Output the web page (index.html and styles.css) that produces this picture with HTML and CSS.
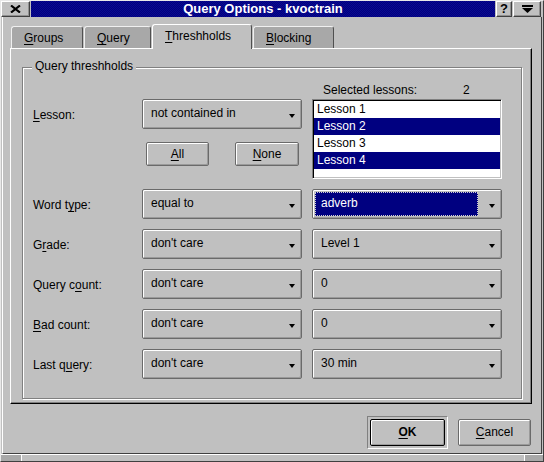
FILE: index.html
```html
<!DOCTYPE html>
<html>
<head>
<meta charset="utf-8">
<title>Query Options - kvoctrain</title>
<link rel="stylesheet" href="styles.css">
</head>
<body>
<div class="window">
  <div class="titlebar">
    <div class="tbtn tb-close">
      <svg width="11" height="8" viewBox="0 0 11 8"><path d="M1 0.5 L10 7.5 M10 0.5 L1 7.5" stroke="#000" stroke-width="2.2" fill="none"/></svg>
    </div>
    <div class="caption">Query Options - kvoctrain</div>
    <div class="tbtn tb-help">?</div>
    <div class="tbtn tb-menu">
      <svg width="11" height="8" viewBox="0 0 11 8"><rect x="0" y="0" width="11" height="2" fill="#000"/><path d="M0 3 H11 L5.5 8 Z" fill="#000"/></svg>
    </div>
  </div>
  <div class="client">
    <div class="tabbar">
      <div class="tab tab-groups"><u>G</u>roups</div>
      <div class="tab tab-query"><u>Q</u>uery</div>
      <div class="tab tab-thresh selected"><u>T</u>hreshholds</div>
      <div class="tab tab-blocking"><u>B</u>locking</div>
    </div>
    <div class="panel">
      <div class="group">
        <span class="legend">Query threshholds</span>
        <div class="sel-head"><span class="sel-label">Selected lessons:</span><span>2</span></div>
        <div class="grid">
          <div class="lbl"><u>L</u>esson:</div>
          <div class="lesson-mid">
            <div class="combo"><span class="combo-text">not contained in</span><span class="arrow"></span></div>
            <div class="btnrow">
              <button class="btn btn-all"><u>A</u>ll</button>
              <button class="btn btn-none"><u>N</u>one</button>
            </div>
          </div>
          <div class="listbox">
            <div class="item">Lesson 1</div>
            <div class="item sel">Lesson 2</div>
            <div class="item">Lesson 3</div>
            <div class="item sel">Lesson 4</div>
          </div>

          <div class="lbl">Word t<u>y</u>pe:</div>
          <div class="combo"><span class="combo-text">equal to</span><span class="arrow"></span></div>
          <div class="combo focus"><span class="hilite">adverb</span><span class="arrow"></span></div>

          <div class="lbl">G<u>r</u>ade:</div>
          <div class="combo"><span class="combo-text">don't care</span><span class="arrow"></span></div>
          <div class="combo"><span class="combo-text">Level 1</span><span class="arrow"></span></div>

          <div class="lbl">Query c<u>o</u>unt:</div>
          <div class="combo"><span class="combo-text">don't care</span><span class="arrow"></span></div>
          <div class="combo"><span class="combo-text">0</span><span class="arrow"></span></div>

          <div class="lbl"><u>B</u>ad count:</div>
          <div class="combo"><span class="combo-text">don't care</span><span class="arrow"></span></div>
          <div class="combo"><span class="combo-text">0</span><span class="arrow"></span></div>

          <div class="lbl">Last q<u>u</u>ery:</div>
          <div class="combo"><span class="combo-text">don't care</span><span class="arrow"></span></div>
          <div class="combo"><span class="combo-text">30 min</span><span class="arrow"></span></div>
        </div>
      </div>
    </div>
    <div class="actions">
      <div class="default-frame"><button class="btn btn-ok"><u>O</u>K</button></div>
      <button class="btn btn-cancel"><u>C</u>ancel</button>
    </div>
  </div>
  <div class="grip"><span class="grip-l"></span><span class="grip-m"></span><span class="grip-r"></span></div>
</div>
</body>
</html>
```
FILE: styles.css
```css
html, body {
  margin: 0;
  padding: 0;
  background: #c0c0c0;
}
body {
  font-family: "Liberation Sans", Arial, sans-serif;
  font-size: 12px;
  color: #000;
}
u { text-decoration-thickness: 1px; text-underline-offset: 2px; }

.window {
  width: 544px;
  height: 462px;
  box-sizing: border-box;
  border: 1px solid;
  border-color: #e8e8e8 #404040 #404040 #e8e8e8;
  display: flex;
  flex-direction: column;
  background: #c0c0c0;
  overflow: hidden;
}

/* title bar */
.titlebar {
  height: 16px;
  display: flex;
  gap: 1px;
  margin-right: 2px;
}
.tbtn {
  height: 16px;
  box-sizing: border-box;
  border: 1px solid;
  border-color: #fff #404040 #404040 #fff;
  box-shadow: inset -1px -1px 0 #909090;
  display: flex;
  align-items: center;
  justify-content: center;
  background: #c0c0c0;
}
.tb-close { width: 29px; }
.tb-help { width: 16px; font-weight: bold; font-size: 13px; line-height: 14px; }
.tb-menu { width: 28px; }
.caption {
  width: 464px;
  height: 16px;
  background-color: #000080;
  background-image: repeating-conic-gradient(#000080 0% 25%, #0a0a90 0% 50%);
  background-size: 2px 2px;
  color: #fff;
  font-weight: bold;
  font-size: 13px;
  line-height: 16px;
  text-align: center;
}

/* client */
.client {
  flex: 1;
  margin: 0 1px;
  border-left: 1px solid #fff;
  border-right: 1px solid #404040;
  border-bottom: 1px solid #404040;
  padding: 7px 9px 0 7px;
  display: flex;
  flex-direction: column;
}

.tabbar {
  height: 24px;
  display: flex;
  align-items: flex-end;
  gap: 1px;
  padding-left: 1px;
  position: relative;
  z-index: 1;
}
.tab {
  height: 22px;
  box-sizing: border-box;
  background: #a8a8a8;
  border-top: 1px solid #f0f0f0;
  border-left: 1px solid #f0f0f0;
  border-right: 1px solid #505050;
  border-radius: 3px 3px 0 0;
  padding: 5px 0 0 12px;
  line-height: 13px;
  white-space: nowrap;
}
.tab-groups { width: 72px; }
.tab-query { width: 67px; }
.tab-thresh { width: 100px; }
.tab-blocking { width: 81px; }
.tab.selected {
  height: 25px;
  margin-bottom: -1px;
  background: #c0c0c0;
  border-top-color: #fff;
  border-left-color: #fff;
}

.panel {
  height: 356px;
  box-sizing: border-box;
  border: 1px solid;
  border-color: #fff #000 #000 #fff;
  box-shadow: inset -1px -1px 0 #808080;
  padding: 18px 0 0 11px;
}

.group {
  position: relative;
  width: 500px;
  height: 332px;
  box-sizing: border-box;
  border: 1px solid #808080;
  box-shadow: inset 1px 1px 0 #fff, 1px 1px 0 #fff;
  padding: 14px 0 0 10px;
}
.legend {
  position: absolute;
  top: -9px;
  left: 9px;
  padding: 0 3px;
  background: #c0c0c0;
  line-height: 15px;
}
.sel-head {
  height: 17px;
  line-height: 17px;
  margin-left: 279px;
  padding-left: 11px;
  display: flex;
}
.sel-label { width: 140px; }

.grid {
  display: grid;
  grid-template-columns: 99px 160px 190px;
  grid-template-rows: 80px repeat(5, 30px);
  column-gap: 10px;
  row-gap: 10px;
}
.lbl {
  line-height: 30px;
  padding-top: 1px;
  white-space: nowrap;
}

.combo {
  height: 30px;
  box-sizing: border-box;
  border: 1px solid #6a6a6a;
  border-radius: 2px;
  box-shadow: inset 1px 1px 0 #fff, inset -1px -1px 0 #9a9a9a;
  display: flex;
  align-items: flex-start;
  padding: 0 6px 0 8px;
}
.combo-text {
  flex: 1;
  line-height: 14px;
  padding-top: 6px;
  white-space: nowrap;
}
.arrow {
  width: 0;
  height: 0;
  margin-top: 14px;
  border-left: 3.5px solid transparent;
  border-right: 3.5px solid transparent;
  border-top: 4px solid #000;
}
.combo.focus { padding-left: 2px; }
.hilite {
  width: 168px;
  height: 24px;
  margin-top: 2px;
  margin-right: 11px;
  box-sizing: border-box;
  background: #000080;
  color: #fff;
  outline: 1px dotted #d0d0d0;
  outline-offset: -1px;
  padding: 4px 0 0 6px;
  line-height: 14px;
}

.lesson-mid {
  display: flex;
  flex-direction: column;
}
.btnrow {
  margin-top: 13px;
  display: flex;
  justify-content: space-between;
  padding: 0 3px 0 4px;
}
.btn {
  box-sizing: border-box;
  border: 1px solid #6a6a6a;
  border-radius: 2px;
  box-shadow: inset 1px 1px 0 #fff, inset -1px -1px 0 #9a9a9a;
  background: #c0c0c0;
  font: inherit;
  color: #000;
  padding: 0;
  text-align: center;
}
.btn-all { width: 63px; height: 24px; line-height: 22px; }
.btn-none { width: 64px; height: 24px; line-height: 22px; }

.listbox {
  height: 80px;
  box-sizing: border-box;
  border: 1px solid;
  border-color: #808080 #fff #fff #808080;
  box-shadow: inset 1px 1px 0 #000, inset -1px -1px 0 #c0c0c0;
  background: #fff;
  padding: 1px;
}
.item {
  height: 17px;
  line-height: 17px;
  padding-left: 3px;
}
.item.sel {
  background: #000080;
  color: #fff;
}

.actions {
  margin-top: 12px;
  height: 33px;
  display: flex;
  justify-content: flex-end;
  align-items: center;
  gap: 10px;
  padding-right: 1px;
}
.default-frame {
  border: 1px solid;
  border-color: #808080 #fff #fff #808080;
  padding: 2px;
  display: flex;
}
.btn-ok {
  width: 75px;
  height: 27px;
  line-height: 25px;
  font-weight: bold;
  border-color: #000;
}
.btn-cancel {
  width: 73px;
  height: 27px;
  line-height: 25px;
}

.grip {
  height: 6px;
  border-top: 1px solid #fff;
  display: flex;
  box-sizing: content-box;
}
.grip-l {
  width: 20px;
  background: #a8a8a8;
  border-right: 1px solid #fff;
}
.grip-m { flex: 1; }
.grip-r {
  width: 18px;
  background: #a8a8a8;
  border-left: 1px solid #fff;
}
```
